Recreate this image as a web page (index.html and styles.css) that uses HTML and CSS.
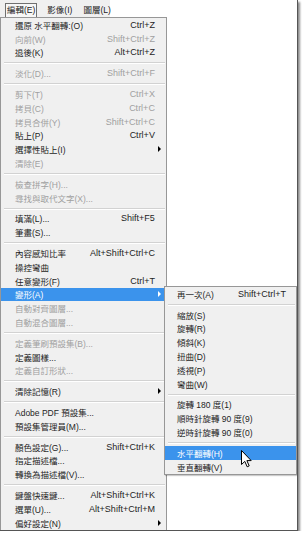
FILE: index.html
```html
<!DOCTYPE html>
<html lang="zh-Hant">
<head>
    <meta charset="UTF-8">
    <title>編輯選單</title>
    <link rel="stylesheet" href="styles.css">
</head>
<body>

<div class="shot">
    <div class="menubar">
        <span class="top open">編輯(E)</span>
        <span class="top">影像(I)</span>
        <span class="top">圖層(L)</span>
    </div>

    <div class="menus">
        <ul class="menu main">
            <li class="item"><span class="label">還原 水平翻轉:(O)</span><span class="key">Ctrl+Z</span><span class="arrow"></span></li>
            <li class="item off"><span class="label">向前(W)</span><span class="key">Shift+Ctrl+Z</span><span class="arrow"></span></li>
            <li class="item"><span class="label">退後(K)</span><span class="key">Alt+Ctrl+Z</span><span class="arrow"></span></li>
            <li class="sep"></li>
            <li class="item off"><span class="label">淡化(D)...</span><span class="key">Shift+Ctrl+F</span><span class="arrow"></span></li>
            <li class="sep"></li>
            <li class="item off"><span class="label">剪下(T)</span><span class="key">Ctrl+X</span><span class="arrow"></span></li>
            <li class="item off"><span class="label">拷貝(C)</span><span class="key">Ctrl+C</span><span class="arrow"></span></li>
            <li class="item off"><span class="label">拷貝合併(Y)</span><span class="key">Shift+Ctrl+C</span><span class="arrow"></span></li>
            <li class="item"><span class="label">貼上(P)</span><span class="key">Ctrl+V</span><span class="arrow"></span></li>
            <li class="item"><span class="label">選擇性貼上(I)</span><span class="key"></span><span class="arrow more"></span></li>
            <li class="item off"><span class="label">清除(E)</span><span class="key"></span><span class="arrow"></span></li>
            <li class="sep"></li>
            <li class="item off"><span class="label">檢查拼字(H)...</span><span class="key"></span><span class="arrow"></span></li>
            <li class="item off"><span class="label">尋找與取代文字(X)...</span><span class="key"></span><span class="arrow"></span></li>
            <li class="sep"></li>
            <li class="item"><span class="label">填滿(L)...</span><span class="key">Shift+F5</span><span class="arrow"></span></li>
            <li class="item"><span class="label">筆畫(S)...</span><span class="key"></span><span class="arrow"></span></li>
            <li class="sep"></li>
            <li class="item"><span class="label">內容感知比率</span><span class="key">Alt+Shift+Ctrl+C</span><span class="arrow"></span></li>
            <li class="item"><span class="label">操控彎曲</span><span class="key"></span><span class="arrow"></span></li>
            <li class="item"><span class="label">任意變形(F)</span><span class="key">Ctrl+T</span><span class="arrow"></span></li>
            <li class="item on"><span class="label">變形(A)</span><span class="key"></span><span class="arrow more"></span></li>
            <li class="item off"><span class="label">自動對齊圖層...</span><span class="key"></span><span class="arrow"></span></li>
            <li class="item off"><span class="label">自動混合圖層...</span><span class="key"></span><span class="arrow"></span></li>
            <li class="sep"></li>
            <li class="item off"><span class="label">定義筆刷預設集(B)...</span><span class="key"></span><span class="arrow"></span></li>
            <li class="item"><span class="label">定義圖樣...</span><span class="key"></span><span class="arrow"></span></li>
            <li class="item off"><span class="label">定義自訂形狀...</span><span class="key"></span><span class="arrow"></span></li>
            <li class="sep"></li>
            <li class="item"><span class="label">清除記憶(R)</span><span class="key"></span><span class="arrow more"></span></li>
            <li class="sep"></li>
            <li class="item"><span class="label">Adobe PDF 預設集...</span><span class="key"></span><span class="arrow"></span></li>
            <li class="item"><span class="label">預設集管理員(M)...</span><span class="key"></span><span class="arrow"></span></li>
            <li class="sep"></li>
            <li class="item"><span class="label">顏色設定(G)...</span><span class="key">Shift+Ctrl+K</span><span class="arrow"></span></li>
            <li class="item"><span class="label">指定描述檔...</span><span class="key"></span><span class="arrow"></span></li>
            <li class="item"><span class="label">轉換為描述檔(V)...</span><span class="key"></span><span class="arrow"></span></li>
            <li class="sep"></li>
            <li class="item"><span class="label">鍵盤快速鍵...</span><span class="key">Alt+Shift+Ctrl+K</span><span class="arrow"></span></li>
            <li class="item"><span class="label">選單(U)...</span><span class="key">Alt+Shift+Ctrl+M</span><span class="arrow"></span></li>
            <li class="item"><span class="label">偏好設定(N)</span><span class="key"></span><span class="arrow more"></span></li>
        </ul>

        <ul class="menu sub">
            <li class="item"><span class="label">再一次(A)</span><span class="key">Shift+Ctrl+T</span><span class="arrow"></span></li>
            <li class="sep"></li>
            <li class="item"><span class="label">縮放(S)</span><span class="key"></span><span class="arrow"></span></li>
            <li class="item"><span class="label">旋轉(R)</span><span class="key"></span><span class="arrow"></span></li>
            <li class="item"><span class="label">傾斜(K)</span><span class="key"></span><span class="arrow"></span></li>
            <li class="item"><span class="label">扭曲(D)</span><span class="key"></span><span class="arrow"></span></li>
            <li class="item"><span class="label">透視(P)</span><span class="key"></span><span class="arrow"></span></li>
            <li class="item"><span class="label">彎曲(W)</span><span class="key"></span><span class="arrow"></span></li>
            <li class="sep"></li>
            <li class="item"><span class="label">旋轉 180 度(1)</span><span class="key"></span><span class="arrow"></span></li>
            <li class="item"><span class="label">順時針旋轉 90 度(9)</span><span class="key"></span><span class="arrow"></span></li>
            <li class="item"><span class="label">逆時針旋轉 90 度(0)</span><span class="key"></span><span class="arrow"></span></li>
            <li class="sep"></li>
            <li class="item on"><span class="label">水平翻轉(H)</span><span class="key"></span><span class="arrow"></span></li>
            <li class="item"><span class="label">垂直翻轉(V)</span><span class="key"></span><span class="arrow"></span></li>
        </ul>
    </div>

    <svg class="cursor" width="11" height="18" viewBox="0 0 11 18">
        <path d="M0.5 0.5 L0.5 14.5 L3.8 11.4 L6.2 16.8 L8.2 15.9 L5.9 10.6 L10.2 10.6 Z" fill="#fff" stroke="#000" stroke-width="1" stroke-linejoin="miter"/>
    </svg>
</div>

</body>
</html>
```

FILE: styles.css
```css
body { margin: 0; background-color: #fff; }
.shot { position: relative; width: 297px; height: 530px; overflow: hidden; background-color: #fff; border-right: 1px solid #555; border-bottom: 1px solid #555; box-shadow: 2px 2px 2px rgba(0, 0, 0, 0.45); font-family: "Liberation Sans", "Noto Sans CJK TC", sans-serif; }

/* menu bar */
.menubar { display: flex; align-items: flex-end; width: 110px; height: 17px; padding-left: 5px; box-sizing: border-box; background-color: #f0f0f0; }
.top { flex-shrink: 0; white-space: nowrap; height: 13px; line-height: 13px; padding: 0 1px; margin-right: 9px; font-size: 8.5px; color: #222; }
.top.open { border: 1px solid #707070; border-bottom: none; background-color: #f7f7f7; }

/* drop-down menus */
.menus { display: flex; align-items: flex-start; }
.menu { list-style: none; margin: 0; padding: 0; background-color: #f0f0f0; border: 1px solid #979797; box-sizing: border-box; }
.main { width: 168px; }
.sub { width: 134px; margin-top: 269px; margin-left: -3px; box-shadow: 1px 1px 1px rgba(0, 0, 0, 0.2); }

.item { display: grid; grid-template-columns: 1fr auto 11px; align-items: center; height: 13.8px; padding-left: 14px; color: #1e1e1e; white-space: nowrap; }
.sub .item { grid-template-columns: 1fr auto 10px; padding-left: 12px; }
.label { font-size: 8.5px; }
.key { font-size: 9px; }
.item.off { color: #a0a0a0; }
.item.on { background-color: #3b93ec; color: #fff; }

.arrow.more::before { content: ""; display: block; width: 0; height: 0; margin-left: 3px; border-left: 3px solid #000; border-top: 3px solid transparent; border-bottom: 3px solid transparent; }
.item.on .arrow.more::before { border-left-color: #fff; }

.sep { display: flex; align-items: center; height: 7px; padding: 0 1px 0 3px; }
.sep::before { content: ""; flex: 1; height: 1px; background-color: #d2d2d2; box-shadow: 0 1px 0 #fff; }

.cursor { position: absolute; left: 241px; top: 450px; }
```
